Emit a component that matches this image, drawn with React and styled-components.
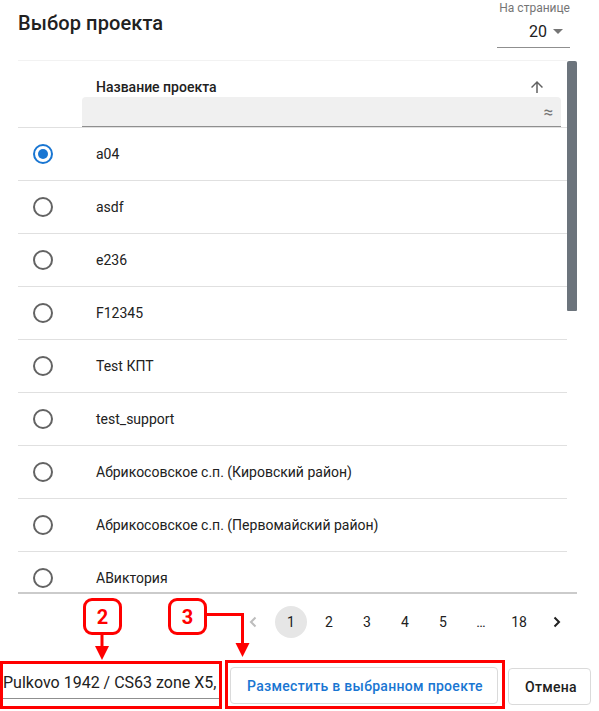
import React from "react";
import styled, { createGlobalStyle } from "styled-components";

const Global = createGlobalStyle`
  html, body { margin: 0; padding: 0; background: #fff; }
  body { font-family: Roboto, "Noto Sans", "Liberation Sans", sans-serif; color: #212121; }
  * { box-sizing: border-box; }
`;

const Page = styled.div`
  position: relative;
  width: 599px;
  height: 711px;
  overflow: hidden;
  background: #fff;
`;

const TopBar = styled.div`
  display: flex;
  justify-content: space-between;
  align-items: flex-start;
  height: 60px;
  padding: 0 29px 0 18px;
`;

const Title = styled.h1`
  margin: 11px 0 0;
  font-size: 20px;
  line-height: 24px;
  font-weight: 500;
  color: #212121;
  letter-spacing: 0.1px;
`;

const PerPage = styled.div`
  display: flex;
  flex-direction: column;
  align-items: flex-end;
  width: 73px;
`;

const PerPageLabel = styled.div`
  font-size: 12px;
  line-height: 16px;
  color: #757575;
  white-space: nowrap;
`;

const SelectBox = styled.div`
  display: flex;
  align-items: center;
  justify-content: flex-end;
  gap: 6px;
  width: 100%;
  height: 32px;
  padding-right: 7px;
  border-bottom: 1px solid #8f8f8f;
  font-size: 16px;
  color: #212121;
`;

const TableArea = styled.div`
  display: flex;
  margin: 0 22px 0 18px;
  height: 534px;
  border-bottom: 2px solid #cbcbcb;
`;

const TableBody = styled.div`
  flex: 1;
  overflow: hidden;
  border-top: 1px solid #f2f2f2;
`;

const ScrollTrack = styled.div`
  flex: 0 0 10px;
  padding-top: 1px;
`;

const ScrollThumb = styled.div`
  width: 10px;
  background: #6c747c;
  border-radius: 2px 2px 1px 1px;
`;

const HeaderRow = styled.div`
  display: flex;
  height: 67px;
  background: #fff;
  border-bottom: 1px solid #e0e0e0;
`;

const RadioCol = styled.div`
  flex: 0 0 64px;
  display: flex;
  align-items: center;
  justify-content: center;
  padding-right: 14px;
`;

const NameHeader = styled.div`
  flex: 1;
  display: flex;
  flex-direction: column;
  padding-right: 6px;
`;

const HeaderTitle = styled.div`
  display: flex;
  align-items: center;
  justify-content: space-between;
  height: 36px;
  padding: 16px 15px 0 14px;
  font-size: 14px;
  line-height: 18px;
  font-weight: 500;
  color: #212121;
`;

const FilterBox = styled.div`
  display: flex;
  align-items: center;
  justify-content: flex-end;
  height: 30px;
  padding-right: 8px;
  background: #f0f0f0;
  border-radius: 4px 4px 0 0;
  border-bottom: 1px solid #8f8f8f;
  color: #757575;
  font-size: 17px;
`;

const Row = styled.div`
  display: flex;
  height: 53px;
  border-bottom: 1px solid #e0e0e0;
`;

const NameCell = styled.div`
  flex: 1;
  display: flex;
  align-items: center;
  padding-left: 14px;
  font-size: 14px;
  color: #212121;
  white-space: nowrap;
`;

const RadioOuter = styled.span`
  display: flex;
  align-items: center;
  justify-content: center;
  width: 20px;
  height: 20px;
  border-radius: 50%;
  border: 2px solid ${(p) => (p.$checked ? "#1976d2" : "#636363")};
`;

const RadioDot = styled.span`
  width: 10px;
  height: 10px;
  border-radius: 50%;
  background: #1976d2;
`;

const Pagination = styled.div`
  display: flex;
  justify-content: flex-end;
  gap: 6px;
  padding: 12px 26px 0 0;
  height: 66px;
`;

const PageItem = styled.div`
  display: flex;
  align-items: center;
  justify-content: center;
  min-width: 32px;
  height: 32px;
  border-radius: 16px;
  font-size: 14px;
  color: ${(p) => (p.$disabled ? "#bdbdbd" : "#212121")};
  background: ${(p) => (p.$active ? "#e6e6e6" : "transparent")};
`;

const Footer = styled.div`
  display: flex;
  align-items: flex-start;
  gap: 3px;
`;

const Mark = styled.div`
  border: 3px solid #ff0000;
  margin-top: ${(p) => p.$top || 0}px;
  padding: ${(p) => p.$pad};
  width: ${(p) => p.$w}px;
  height: ${(p) => p.$h}px;
`;

const CoordInput = styled.div`
  height: 35px;
  display: flex;
  align-items: center;
  padding-top: 2px;
  border-bottom: 1px solid #8f8f8f;
  font-size: 16px;
  color: #212121;
  white-space: nowrap;
  overflow: hidden;
`;

const Button = styled.button`
  height: 37px;
  padding: 0 16px;
  border: 1px solid #dadada;
  border-radius: 4px;
  background: #fff;
  font-family: inherit;
  font-size: 14px;
  font-weight: 500;
  letter-spacing: 0.3px;
  color: ${(p) => (p.$primary ? "#1976d2" : "#212121")};
  white-space: nowrap;
  width: ${(p) => p.$w}px;
`;

const CancelWrap = styled.div`
  margin-top: 8px;
`;

const Badge = styled.div`
  position: absolute;
  left: ${(p) => p.$x}px;
  top: 598px;
  width: 39px;
  height: 37px;
  border: 3px solid #ff0000;
  border-radius: 9px;
  background: #fff;
  display: flex;
  align-items: center;
  justify-content: center;
  color: #ff0000;
  font-size: 20px;
  font-weight: 700;
  z-index: 3;
`;

const Overlay = styled.svg`
  position: absolute;
  left: 0;
  top: 0;
  pointer-events: none;
  z-index: 2;
`;

const rows = [
  "a04",
  "asdf",
  "e236",
  "F12345",
  "Test КПТ",
  "test_support",
  "Абрикосовское с.п. (Кировский район)",
  "Абрикосовское с.п. (Первомайский район)",
  "АВиктория",
  "Алексеевское с.п.",
];

const ArrowUp = () => (
  <svg width="18" height="18" viewBox="0 0 24 24">
    <path d="M4 12l1.41 1.41L11 7.83V20h2V7.83l5.58 5.59L20 12l-8-8-8 8z" fill="#616161" />
  </svg>
);

const Caret = () => (
  <svg width="10" height="5" viewBox="0 0 10 5">
    <path d="M0 0l5 5 5-5z" fill="#757575" />
  </svg>
);

const Chevron = ({ dir, color }) => (
  <svg width="8" height="12" viewBox="0 0 8 12">
    <path
      d={dir === "left" ? "M6.5 1.5L2 6l4.5 4.5" : "M1.5 1.5L6 6l-4.5 4.5"}
      fill="none"
      stroke={color}
      strokeWidth="2"
    />
  </svg>
);

const totalRows = 20;
const viewport = 531;
const contentHeight = 67 + totalRows * 53;
const thumbHeight = Math.round((viewport / contentHeight) * viewport);

export default function App() {
  return (
    <Page>
      <Global />
      <TopBar>
        <Title>Выбор проекта</Title>
        <PerPage>
          <PerPageLabel>На странице</PerPageLabel>
          <SelectBox>
            <span>20</span>
            <Caret />
          </SelectBox>
        </PerPage>
      </TopBar>

      <TableArea>
        <TableBody>
          <HeaderRow>
            <RadioCol />
            <NameHeader>
              <HeaderTitle>
                <span>Название проекта</span>
                <ArrowUp />
              </HeaderTitle>
              <FilterBox>≈</FilterBox>
            </NameHeader>
          </HeaderRow>
          {rows.map((name, i) => (
            <Row key={name}>
              <RadioCol>
                <RadioOuter $checked={i === 0}>{i === 0 && <RadioDot />}</RadioOuter>
              </RadioCol>
              <NameCell>{name}</NameCell>
            </Row>
          ))}
        </TableBody>
        <ScrollTrack>
          <ScrollThumb style={{ height: thumbHeight }} />
        </ScrollTrack>
      </TableArea>

      <Pagination>
        <PageItem $disabled>
          <Chevron dir="left" color="#bdbdbd" />
        </PageItem>
        <PageItem $active>1</PageItem>
        <PageItem>2</PageItem>
        <PageItem>3</PageItem>
        <PageItem>4</PageItem>
        <PageItem>5</PageItem>
        <PageItem>…</PageItem>
        <PageItem>18</PageItem>
        <PageItem>
          <Chevron dir="right" color="#212121" />
        </PageItem>
      </Pagination>

      <Footer>
        <Mark $top={1} $w={222} $h={48} $pad="0 0 0 0">
          <CoordInput>Pulkovo 1942 / CS63 zone X5, Gauss-Kruger</CoordInput>
        </Mark>
        <Mark $w={280} $h={49} $pad="4px 4px 2px 2px">
          <Button $primary $w={268}>Разместить в выбранном проекте</Button>
        </Mark>
        <CancelWrap>
          <Button $w={83}>Отмена</Button>
        </CancelWrap>
      </Footer>

      <Badge $x={83}>2</Badge>
      <Badge $x={168}>3</Badge>
      <Overlay width="599" height="711" viewBox="0 0 599 711">
        <line x1="102" y1="634" x2="102" y2="648" stroke="#ff0000" strokeWidth="3" />
        <path d="M95 646 L109 646 L102 660 Z" fill="#ff0000" />
        <polyline points="206,614.5 242.5,614.5 242.5,645" fill="none" stroke="#ff0000" strokeWidth="3" />
        <path d="M235.5 643 L249.5 643 L242.5 657 Z" fill="#ff0000" />
      </Overlay>
    </Page>
  );
}
